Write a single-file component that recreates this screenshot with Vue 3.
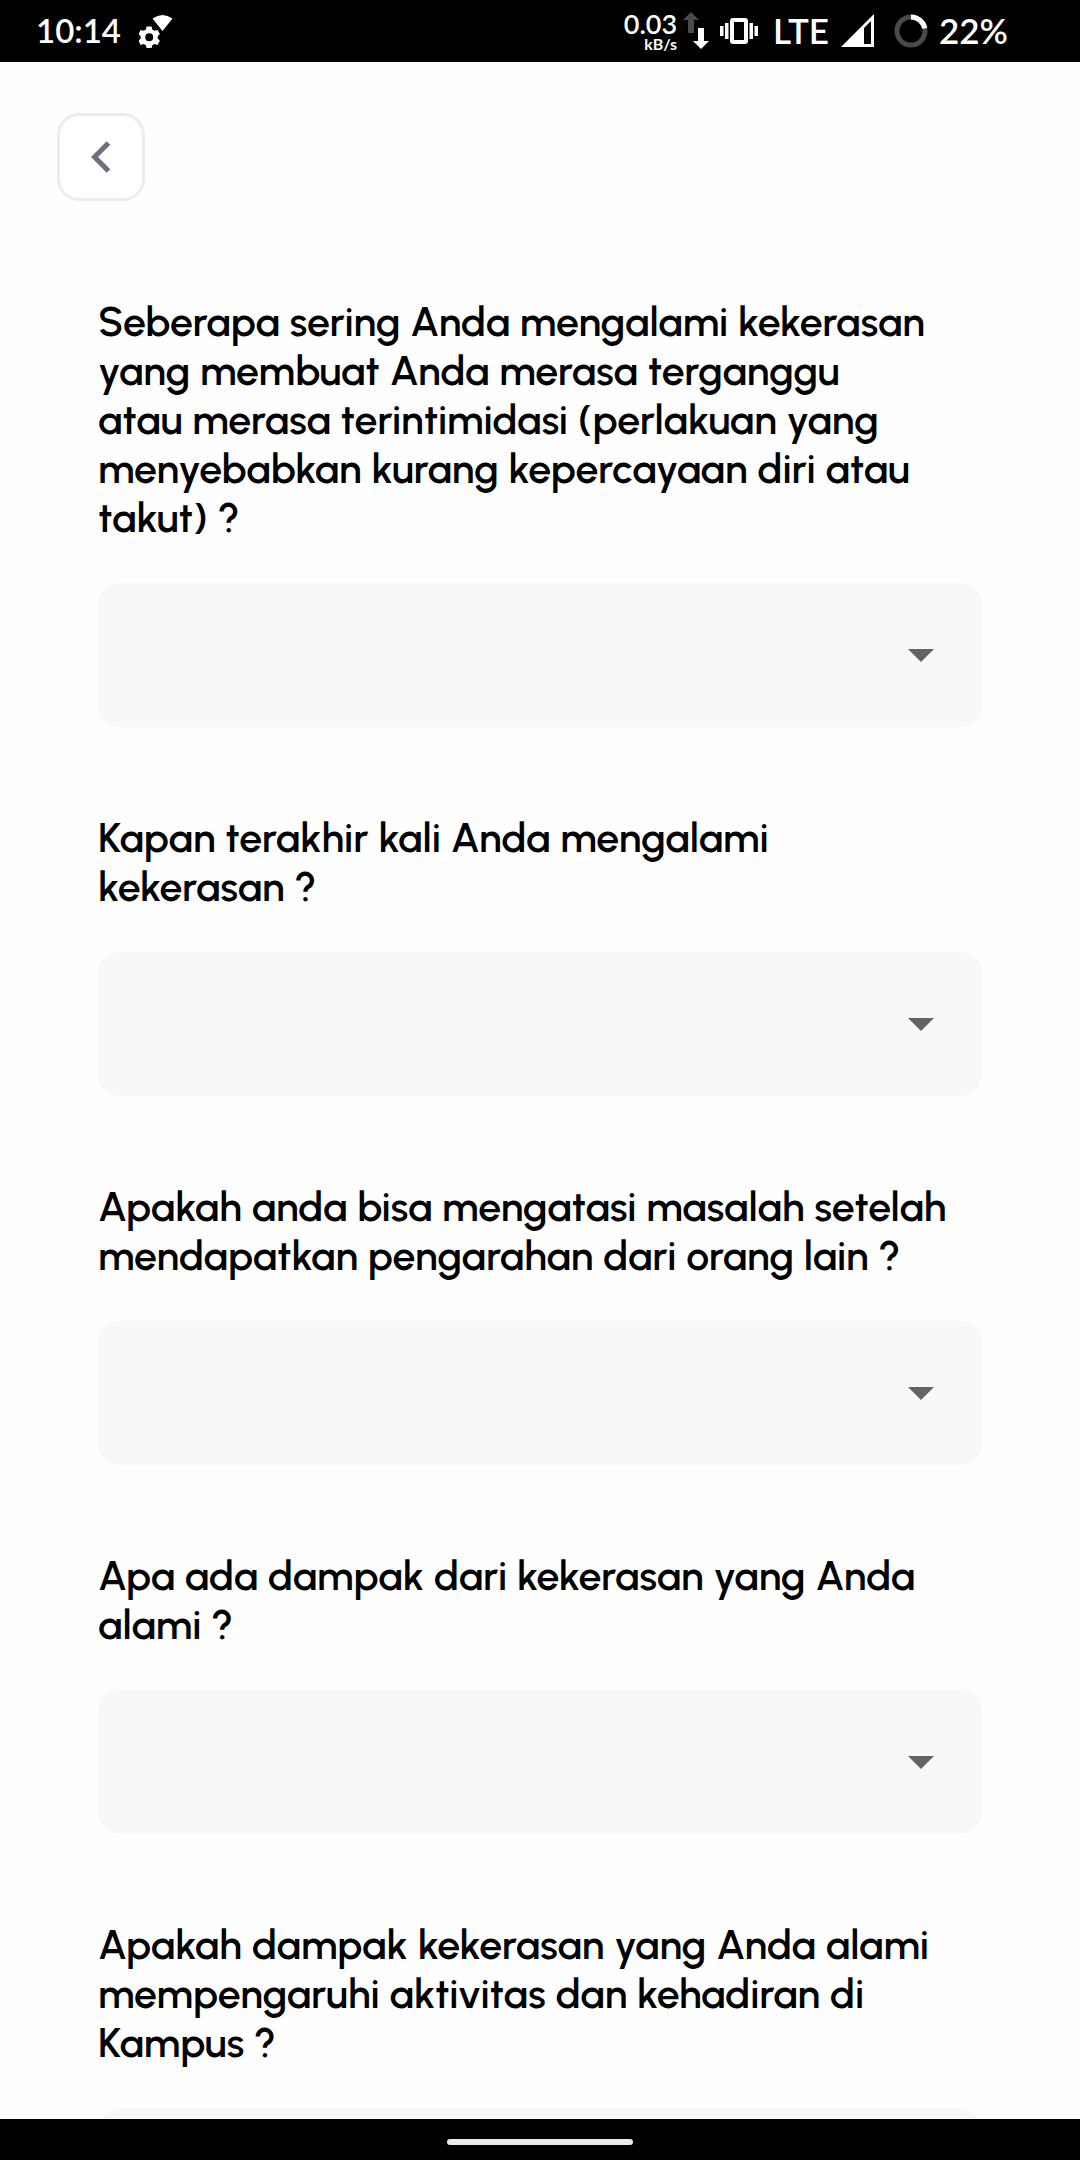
<script setup>
import { reactive } from 'vue'

const questions = [
  {
    id: 'frekuensi',
    lines: [
      'Seberapa sering Anda mengalami kekerasan',
      'yang membuat Anda merasa terganggu',
      'atau merasa terintimidasi (perlakuan yang',
      'menyebabkan kurang kepercayaan diri atau',
      'takut) ?',
    ],
  },
  { id: 'terakhir', lines: ['Kapan terakhir kali Anda mengalami', 'kekerasan ?'] },
  {
    id: 'arahan',
    lines: ['Apakah anda bisa mengatasi masalah setelah', 'mendapatkan pengarahan dari orang lain ?'],
  },
  { id: 'dampak', lines: ['Apa ada dampak dari kekerasan yang Anda', 'alami ?'] },
  {
    id: 'aktivitas',
    lines: [
      'Apakah dampak kekerasan yang Anda alami',
      'mempengaruhi aktivitas dan kehadiran di',
      'Kampus ?',
    ],
  },
]

const answers = reactive({})
questions.forEach((q) => { answers[q.id] = '' })
</script>

<template>
  <div class="screen">
    <header class="status">
      <div class="status-left">
        <span class="clock">10:14</span>
        <svg class="icon" width="34" height="34" viewBox="0 0 34 34" fill="#fff" aria-hidden="true">
          <path d="M13.500 4.500Q23.500-2.500 33.500 4.500L23.500 17Z" />
          <path fill-rule="evenodd" d="M7.600 12.500h5l.7 3 2.200 1.300 3-.9 2.400 4.200-2.200 2.100v2.400l2.200 2.100-2.400 4.200-3-.9-2.200 1.300-.7 2.700h-5l-.7-2.700-2.200-1.300-3 .9-2.200-4.200 2.200-2.100v-2.400l-2.200-2.100 2.200-4.200 3 .9 2.200-1.300zM10.200 19.200a4 4 0 1 0 0 8 4 4 0 0 0 0-8z" />
        </svg>
      </div>
      <div class="status-right">
        <div class="speed">
          <span class="rate">0.03</span>
          <span class="unit">kB/s</span>
        </div>
        <svg class="arrows" width="26" height="38" viewBox="0 0 26 38" aria-hidden="true">
          <path fill="#4a4a4a" d="M8 0l8 8h-5v13H5V8H0z" />
          <path fill="#fff" d="M15 16h6v13h5l-8 8-8-8h5z" />
        </svg>
        <svg class="vibrate" width="38" height="28" viewBox="0 0 38 28" fill="#fff" aria-hidden="true">
          <path fill-rule="evenodd" d="M13 1h12a3 3 0 0 1 3 3v20a3 3 0 0 1-3 3H13a3 3 0 0 1-3-3V4a3 3 0 0 1 3-3zm1 4v18h10V5z" />
          <path d="M5 6h3.500v16H5zM0 9h3.500v10H0zM29.500 6H33v16h-3.500zM34.500 9H38v10h-3.500z" />
        </svg>
        <span class="network">LTE</span>
        <svg class="signal" width="34" height="34" viewBox="0 0 34 34" fill="#fff" aria-hidden="true">
          <path fill-rule="evenodd" d="M33 0v33H0zM30 7l-7 7v16h7z" />
        </svg>
        <svg class="ring" width="34" height="34" viewBox="0 0 34 34" fill="none" stroke-width="5" aria-hidden="true">
          <circle cx="17" cy="17" r="14" stroke="#4a4a4a" />
          <path d="M17 3a14 14 0 0 1 13.750 11.400" stroke="#fff" />
        </svg>
        <span class="battery">22%</span>
      </div>
    </header>

    <main class="content">
      <button class="back" type="button" aria-label="Kembali">
        <svg width="20" height="32" viewBox="0 0 20 32" fill="none" stroke="#6a707c" stroke-width="5" aria-hidden="true">
          <path d="M17.500 2L3.500 16l14 14" />
        </svg>
      </button>

      <form class="form" @submit.prevent>
        <div v-for="q in questions" :key="q.id" class="field">
          <label class="question" :for="q.id">{{ q.lines.join('\n') }}</label>
          <div class="picker">
            <select :id="q.id" v-model="answers[q.id]" class="select">
              <option value=""></option>
            </select>
            <svg class="caret" width="26" height="14" viewBox="0 0 26 14" fill="#636363" aria-hidden="true">
              <path d="M0 1h26L13 14z" />
            </svg>
          </div>
        </div>
      </form>
    </main>

    <footer class="nav">
      <span class="handle"></span>
    </footer>
  </div>
</template>

<style>
body {
  background: #fff;
}
</style>

<style scoped>
.screen {
  display: flex;
  flex-direction: column;
  height: 100vh;
  overflow: hidden;
  background: #fefefe;
  font-family: Urbanist, Lato, sans-serif;
  font-weight: 560;
  color: #000;
}

.status {
  flex: none;
  display: flex;
  align-items: center;
  justify-content: space-between;
  height: 62px;
  padding: 0 72px 0 36px;
  background: #000;
  color: #fff;
  font-family: Lato, sans-serif;
  font-size: 35px;
  font-weight: 600;
  line-height: 40px;
}

.status-left,
.status-right {
  display: flex;
  align-items: center;
}

.clock,
.network,
.battery {
  padding-bottom: 2px;
}

.clock {
  font-size: 33px;
}

.icon {
  margin-left: 18px;
}

.speed {
  display: flex;
  flex-direction: column;
  align-items: flex-end;
}

.rate {
  font-size: 27px;
  line-height: 26px;
}

.unit {
  font-size: 16px;
  font-weight: 700;
  line-height: 14px;
}

.arrows {
  margin-left: 6px;
}

.vibrate {
  margin-left: 11px;
}

.network {
  margin-left: 15px;
}

.signal {
  margin-left: 12px;
}

.ring {
  margin-left: 19px;
}

.battery {
  margin-left: 11px;
}

.content {
  flex: 1;
  min-height: 0;
  overflow-y: auto;
  scrollbar-width: none;
  padding: 51px 57px 0;
}

.back {
  display: flex;
  align-items: center;
  justify-content: center;
  width: 88px;
  height: 88px;
  padding: 0;
  border: 3px solid #e8ecf4;
  border-radius: 22px;
  background: #fff;
}

.form {
  display: flex;
  flex-direction: column;
  gap: 86px;
  padding: 96px 41px 86px;
}

.field {
  display: flex;
  flex-direction: column;
  gap: 41px;
}

.question {
  font-size: 41px;
  line-height: 49px;
  white-space: pre;
}

.picker {
  display: grid;
  align-items: center;
}

.select {
  grid-area: 1 / 1;
  width: 100%;
  height: 144px;
  padding: 0 96px 0 40px;
  border: 0;
  border-radius: 22px;
  appearance: none;
  background: #f7f8fa;
  color: inherit;
  font: inherit;
  font-size: 41px;
}

.caret {
  grid-area: 1 / 1;
  justify-self: end;
  margin-right: 48px;
  pointer-events: none;
}

.nav {
  flex: none;
  display: flex;
  justify-content: center;
  align-items: center;
  box-sizing: border-box;
  height: 41px;
  padding-top: 5px;
  background: #000;
}

.handle {
  width: 186px;
  height: 6px;
  border-radius: 3px;
  background: #ebe9ec;
}
</style>
